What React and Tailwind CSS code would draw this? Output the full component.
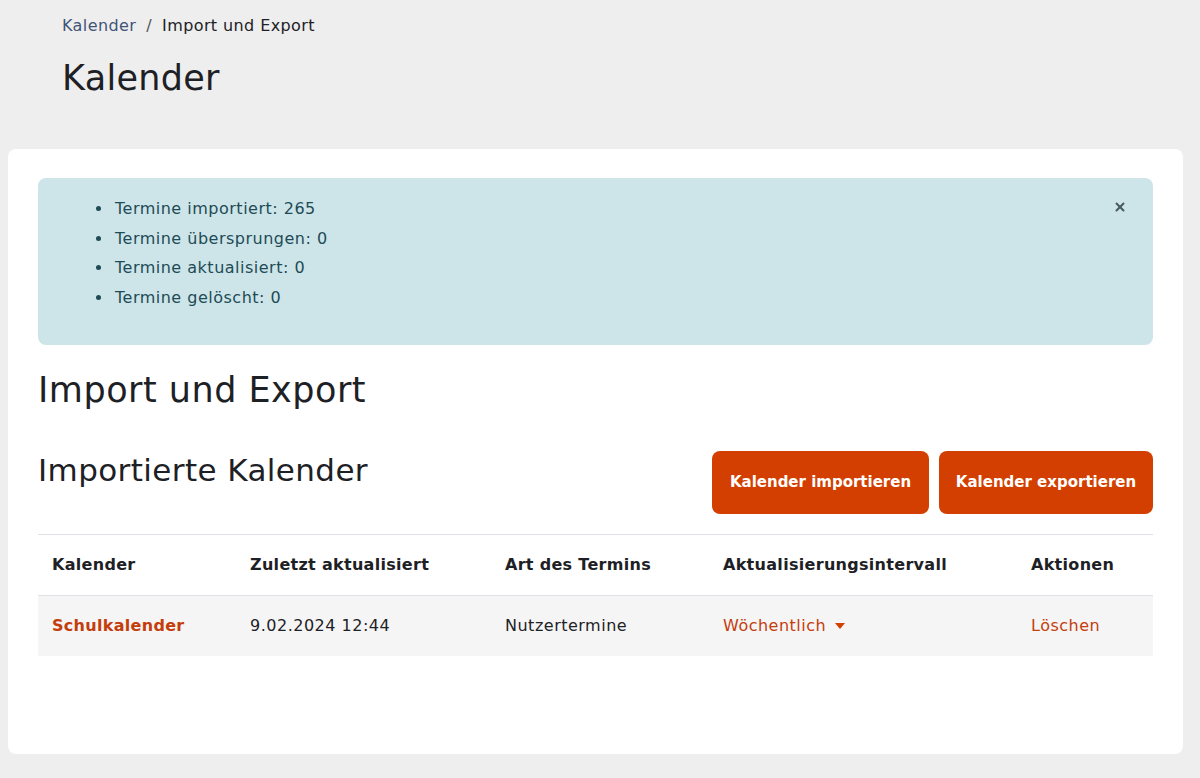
import React from "react";
import { X } from "lucide-react";

const stats = [
  "Termine importiert: 265",
  "Termine übersprungen: 0",
  "Termine aktualisiert: 0",
  "Termine gelöscht: 0",
];

const cols = "grid grid-cols-[198px_255px_218px_308px_1fr]";

export default function App() {
  return (
    <div className="min-h-screen bg-[#eeeeee] font-['DejaVu_Sans',sans-serif] text-[#1d2125] pb-6">
      <header className="px-[62px] pt-[14px]">
        <nav className="flex items-center gap-[10px] text-[16px] leading-6 tracking-[0.4px]">
          <a href="#" className="text-[#3f5576]">Kalender</a>
          <span className="text-[#555]">/</span>
          <span>Import und Export</span>
        </nav>
        <h1 className="mt-[20px] text-[35px] leading-[40px] font-normal tracking-[0.3px]">Kalender</h1>
      </header>

      <main className="mx-2 mt-[51px] w-[1175px] min-h-[605px] bg-white rounded-lg px-[30px] pt-[29px] pb-8">
        <div className="relative bg-[#cde5e9] rounded-lg min-h-[167px] pl-[75px] pt-[16px] text-[#1e4b55]">
          <ul className="list-disc text-[16px] leading-[29.6px] tracking-[0.5px] marker:text-[#1e4b55]">
            {stats.map((s, i) => (
              <li key={i} className="pl-[2px]">{s}</li>
            ))}
          </ul>
          <button className="absolute right-[26px] top-[22px] text-[#4b5a5d]">
            <X className="w-[14px] h-[14px]" strokeWidth={3.5} />
          </button>
        </div>

        <h2 className="mt-[24px] text-[35px] leading-[42px] font-normal tracking-[0.5px]">Import und Export</h2>

        <div className="mt-[39px] flex items-start justify-between">
          <h3 className="mt-[1px] text-[31px] leading-[38px] font-normal tracking-[0.4px]">Importierte Kalender</h3>
          <div className="flex gap-[10px] mt-[1px]">
            <button className="h-[63px] w-[217px] whitespace-nowrap rounded-lg bg-[#d33f00] text-white text-[15px] font-semibold">Kalender importieren</button>
            <button className="h-[63px] w-[214px] whitespace-nowrap rounded-lg bg-[#d33f00] text-white text-[15px] font-semibold">Kalender exportieren</button>
          </div>
        </div>

        <div className="mt-[20px] border-t border-[#dee2e6] text-[16px] tracking-[0.5px]">
          <div className={`${cols} h-[61px] items-center border-b border-[#dee2e6] font-bold tracking-[0.3px]`}>
            <div className="px-[14px]">Kalender</div>
            <div className="px-[14px]">Zuletzt aktualisiert</div>
            <div className="px-[14px]">Art des Termins</div>
            <div className="px-[14px]">Aktualisierungsintervall</div>
            <div className="px-[14px]">Aktionen</div>
          </div>
          <div className={`${cols} h-[60px] items-center bg-[#f5f5f5]`}>
            <div className="px-[14px]"><a href="#" className="font-bold tracking-[0.3px] text-[#c43d0c]">Schulkalender</a></div>
            <div className="px-[14px]">9.02.2024 12:44</div>
            <div className="px-[14px]">Nutzertermine</div>
            <div className="px-[14px] flex items-center gap-[8px] text-[#c43d0c]">
              <span>Wöchentlich</span>
              <svg width="12" height="8" viewBox="0 0 12 8"><path d="M1 1h10L6 7z" fill="#d33f00" /></svg>
            </div>
            <div className="px-[14px] text-[#c43d0c]">Löschen</div>
          </div>
        </div>
      </main>
    </div>
  );
}
